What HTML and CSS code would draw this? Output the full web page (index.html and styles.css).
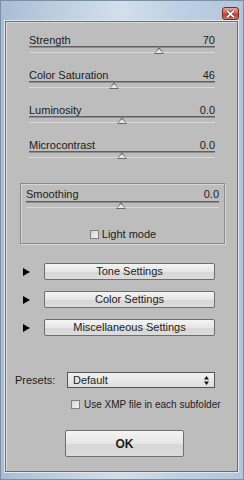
FILE: index.html
```
<!DOCTYPE html>
<html lang="en">
  <head>
    <meta charset="utf-8">
    <link rel="stylesheet" href="styles.css">
    <title>Settings</title>
  </head>
  <body>
    <div class="window">
      <div class="titlebar">
        <span class="close">
          <svg width="9" height="8" viewBox="0 0 9 8"><path d="M1 0.5 L8 7.5 M8 0.5 L1 7.5" stroke="#5a1d18" stroke-width="3"/><path d="M1 0.5 L8 7.5 M8 0.5 L1 7.5" stroke="#fff" stroke-width="1.8"/></svg>
        </span>
      </div>
      <div class="panel">
        <div class="slider">
          <div class="label"><span>Strength</span><span>70</span></div>
          <div class="track"><span class="thumb" style="left: 125px"></span></div>
        </div>
        <div class="slider">
          <div class="label"><span>Color Saturation</span><span>46</span></div>
          <div class="track"><span class="thumb" style="left: 80px"></span></div>
        </div>
        <div class="slider">
          <div class="label"><span>Luminosity</span><span>0.0</span></div>
          <div class="track"><span class="thumb" style="left: 88px"></span></div>
        </div>
        <div class="slider">
          <div class="label"><span>Microcontrast</span><span>0.0</span></div>
          <div class="track"><span class="thumb" style="left: 88px"></span></div>
        </div>

        <div class="group">
          <div class="slider inner">
            <div class="label"><span>Smoothing</span><span>0.0</span></div>
            <div class="track"><span class="thumb" style="left: 90px"></span></div>
          </div>
          <div class="check center"><span class="box"></span><span>Light mode</span></div>
        </div>

        <div class="expander"><span class="arrow"></span><button class="btn">Tone Settings</button></div>
        <div class="expander"><span class="arrow"></span><button class="btn">Color Settings</button></div>
        <div class="expander"><span class="arrow"></span><button class="btn">Miscellaneous Settings</button></div>

        <div class="presets">
          <span class="plabel">Presets:</span>
          <div class="select">
            <span>Default</span>
            <svg width="5" height="9" viewBox="0 0 5 9"><path d="M2.5 0 L5 3.5 L0 3.5 Z M2.5 9 L5 5.5 L0 5.5 Z" fill="#111"/></svg>
          </div>
        </div>
        <div class="check xmp"><span class="box"></span><span>Use XMP file in each subfolder</span></div>

        <button class="ok">OK</button>
      </div>
    </div>
  </body>
</html>
```
FILE: styles.css
```
* { font-family: "Liberation Sans", Arial, sans-serif; box-sizing: border-box; }
body {
  margin: 0;
  background: #b3c6db;
}
.window {
  width: 244px;
  height: 480px;
  display: flex;
  flex-direction: column;
  background: linear-gradient(90deg, #a9bdd3, #c3d3e4 30%, #d3dfeb 50%, #bccfe3 75%, #b2c5da);
  border: 1px solid #7d8fa5;
}
.titlebar {
  height: 20px;
  display: flex;
  justify-content: flex-end;
  padding-right: 4px;
}
.close {
  margin-top: 6px;
  width: 17px;
  height: 13px;
  border: 1px solid #7e2a24;
  border-radius: 3px;
  background: linear-gradient(#e9a59b, #d1685c 45%, #bd3f31 55%, #d27062);
  display: flex;
  align-items: center;
  justify-content: center;
}
.panel {
  margin: 0 5px 0 4px;
  height: 451px;
  border: 1px solid #6d6d6d;
  box-shadow: inset 1px 1px 0 #dcdcdc, 0 0 0 1px #dfe7f0;
  background: #bdbdbd;
  padding-top: 12px;
  color: #1c1c1c;
  font-size: 11px;
}
.slider {
  width: 186px;
  margin: 0 0 16px 23px;
}
.label {
  display: flex;
  justify-content: space-between;
  height: 12px;
  line-height: 12px;
}
.track {
  position: relative;
  height: 7px;
  border-top: 1px solid #5f5f5f;
  border-bottom: 1px solid #d8d8d8;
  background: linear-gradient(#8e8e8e 0 1px, transparent 1px);
}
.thumb {
  position: absolute;
  top: 0;
  width: 10px;
  height: 7px;
  background: #6a6a6a;
  clip-path: polygon(50% 0, 100% 100%, 0 100%);
}
.thumb::after {
  content: "";
  position: absolute;
  left: 1px;
  top: 2px;
  width: 8px;
  height: 4px;
  background: #e6e6e6;
  clip-path: polygon(50% 0, 100% 100%, 0 100%);
}
.group {
  margin: 25px 0 0 14px;
  width: 205px;
  height: 61px;
  border: 1px solid #8a8a8a;
  box-shadow: inset 1px 1px 0 #d6d6d6, 1px 1px 0 #d6d6d6;
  padding: 4px 4px 0 5px;
}
.slider.inner {
  width: 193px;
  margin: 0;
}
.slider.inner .label { height: 13px; }
.check {
  display: flex;
  align-items: center;
  gap: 3px;
  height: 13px;
  line-height: 13px;
}
.check.center {
  margin-top: 20px;
  justify-content: center;
}
.box {
  width: 9px;
  height: 9px;
  border: 1px solid #808080;
  background: linear-gradient(135deg, #d4d4d4, #f5f5f5);
}
.expander {
  display: flex;
  align-items: center;
  margin: 19px 0 0 17px;
}
.expander + .expander { margin-top: 11px; }
.arrow {
  width: 0;
  height: 0;
  border-left: 7px solid #000;
  border-top: 4px solid transparent;
  border-bottom: 4px solid transparent;
}
.btn, .ok {
  border: 1px solid #6e6e6e;
  border-radius: 2px;
  background: linear-gradient(#f4f4f4, #e6e6e6 50%, #d7d7d7 51%, #dcdcdc);
  color: #1c1c1c;
  padding: 0;
  font-size: 11px;
}
.btn {
  width: 171px;
  height: 17px;
  margin-left: 14px;
  line-height: 15px;
}
.presets {
  display: flex;
  align-items: center;
  margin: 36px 0 0 9px;
}
.plabel {
  width: 52px;
}
.select {
  width: 148px;
  height: 16px;
  border: 1px solid #555;
  background: linear-gradient(#f2f2f2, #dedede);
  display: flex;
  align-items: center;
  justify-content: space-between;
  padding: 0 5px 0 5px;
}
.check.xmp {
  margin: 10px 0 0 65px;
  gap: 4px;
  font-size: 10px;
}
.ok {
  display: block;
  margin: 19px 0 0 59px;
  width: 119px;
  height: 27px;
  font-size: 12px;
  font-weight: bold;
  border-color: #707070;
}
```
